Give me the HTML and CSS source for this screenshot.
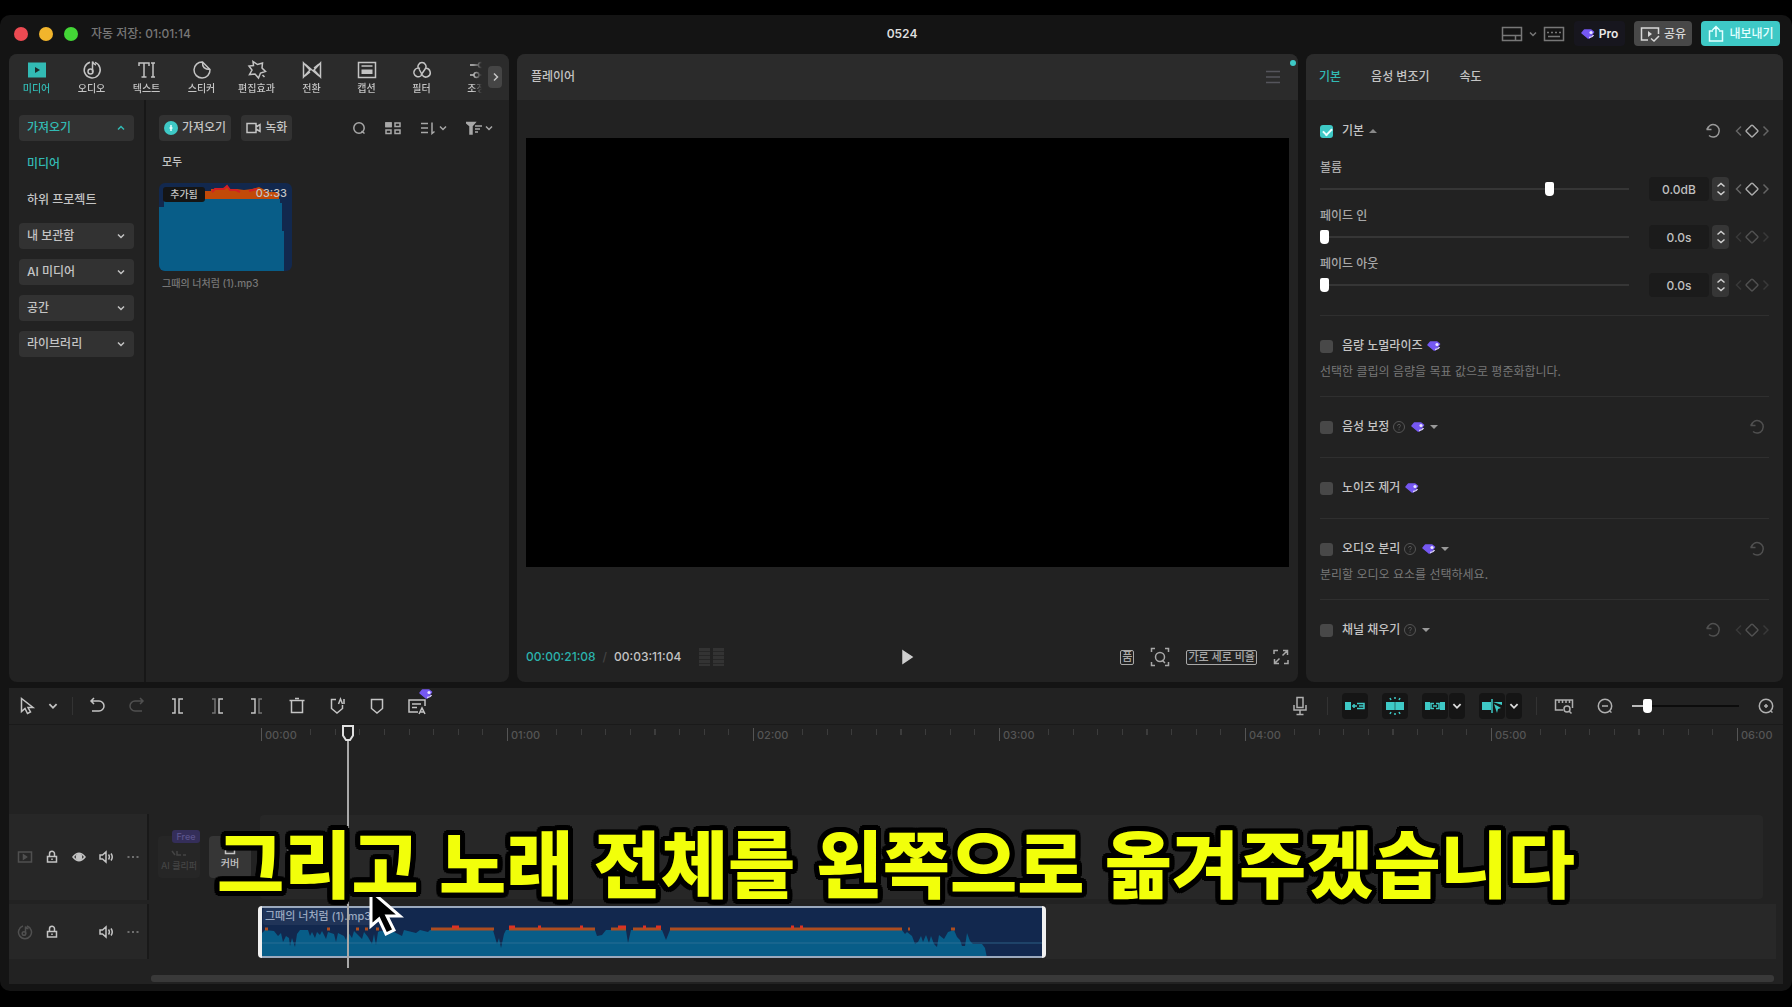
FILE: index.html
```
<!DOCTYPE html>
<html lang="ko">
<head>
    <meta charset="UTF-8">
    <meta name="viewport" content="width=device-width, initial-scale=1.0">
    <title>0524</title>
    <link rel="stylesheet" href="styles.css">
</head>
<body>

    <svg class="defs" aria-hidden="true">
        <symbol id="i-down" viewBox="0 0 10 10"><path d="M2 3.5l3 3 3-3"/></symbol>
        <symbol id="i-up" viewBox="0 0 10 10"><path d="M2 6.5l3-3 3 3"/></symbol>
        <symbol id="i-reset" viewBox="0 0 16 16"><path d="M1.5 6.5h5M2 6.500A6.200 6.200 0 1 1 4 12.500M1.500 6.500L4 4"/></symbol>
        <symbol id="i-key" viewBox="0 0 34 16"><path class="dim" d="M6 3.500L1.500 8 6 12.500M28.500 3.500L33 8l-4.500 4.500"/><path class="diamond" d="M16.300 2.500q.7-.7 1.400 0l4.800 4.800q.7.7 0 1.400l-4.800 4.800q-.7.7-1.400 0l-4.800-4.800q-.7-.7 0-1.400z"/></symbol>
        <symbol id="i-gem" viewBox="0 0 14 12"><path d="M3.500 2h6.500l2.500 2-4.500 6H7L1 5z" fill="#7558f2" stroke="#7558f2" stroke-linejoin="round"/><circle cx="10" cy="4.500" r="1.600" fill="#e9e4ff" stroke="none"/><path d="M8 9.500q3 .2 4.500-2.500" stroke="#d9d0ff" stroke-width="1.500"/></symbol>
        <symbol id="i-help" viewBox="0 0 14 14"><circle cx="7" cy="7" r="5.500"/><path d="M5.500 5.800Q5.600 4.300 7 4.300t1.500 1.300Q8.500 6.500 7 7.500v.8M7 9.300v1"/></symbol>
        <symbol id="i-lock" viewBox="0 0 16 16"><path d="M3.500 7.500h9v5.500h-9zM5.500 7V4.800a2.500 2.500 0 0 1 5 0V7M8 9.500v1.500"/></symbol>
        <symbol id="i-sound" viewBox="0 0 16 16"><path d="M2 6h2.500L8 3v10L4.500 10H2zM10.500 5.500q1.800 2.500 0 5M13 4.500q2.500 3.500 0 7"/></symbol>
        <symbol id="i-more" viewBox="0 0 16 16"><path d="M2.500 8h2M7 8h2M11.500 8h2"/></symbol>
    </svg>

    <div class="window">
        <header class="titlebar">
            <div class="title-left">
                <span class="light red"></span>
                <span class="light yellow"></span>
                <span class="light green"></span>
                <span class="autosave">자동 저장: 01:01:14</span>
            </div>
            <h1>0524</h1>
            <div class="title-right">
                <button class="plain layout-btn" aria-label="레이아웃">
                    <svg width="22" height="18" viewBox="0 0 22 18"><path d="M1.500 2.500h19v13h-19zM1.500 10.500h19M14.500 10.500v5"/></svg>
                    <svg width="10" height="10"><use href="#i-down"/></svg>
                </button>
                <button class="plain" aria-label="단축키">
                    <svg width="22" height="18" viewBox="0 0 22 18"><path d="M1.500 2.500h19v13h-19zM4 7.500h2M8 7.500h2M12 7.500h2M16 7.500h2M5 11.500h12"/></svg>
                </button>
                <button class="pro"><svg width="14" height="12"><use href="#i-gem"/></svg>Pro</button>
                <button class="share">
                    <svg width="20" height="18" viewBox="0 0 20 18"><path d="M8 15H1.500V3h17v6M11 13.500l3 2.500 5-5"/><path d="M8 6v6l4-3z" fill="currentColor" stroke="none"/></svg>
                    공유
                </button>
                <button class="export">
                    <svg width="18" height="18" viewBox="0 0 18 18"><path d="M6 6H2.500v10h13V6H12M9 12V2M5.500 5L9 1.500 12.500 5"/></svg>
                    내보내기
                </button>
            </div>
        </header>

        <main class="workspace">
            <section class="panel library">
                <div class="panel-head nav">
                    <div class="nav-tabs">
                        <button class="tab active"><svg width="20" height="20" viewBox="0 0 20 20"><path d="M1 2.500h18v15H1z" fill="currentColor" stroke="none"/><path d="M8 7v6l5-3z" fill="#1c2b2b" stroke="none"/></svg>미디어</button>
                        <button class="tab"><svg width="20" height="20" viewBox="0 0 20 20"><path d="M8 2.200a8 8 0 1 0 5 .2M10.500 12V1.500q1 3 3.500 3.500"/><circle cx="8.500" cy="11.500" r="2.500"/></svg>오디오</button>
                        <button class="tab"><svg width="20" height="20" viewBox="0 0 20 20"><path d="M2 6V3h10v3M7 3v14M4.500 17h5M14 3h4M16 3v14M14 17h4"/></svg>텍스트</button>
                        <button class="tab"><svg width="20" height="20" viewBox="0 0 20 20"><path d="M10.500 2a8 8 0 1 0 7.500 7.500zM10.500 2q-.5 7.500 7.500 7.500"/></svg>스티커</button>
                        <button class="tab"><svg width="20" height="20" viewBox="0 0 20 20"><path d="M6 1.500l4.500 3L15.500 3 15 8l3.500 3.500-5 1.500-2 5-3.500-4-5.500.5L5 10 2 6l4.500-.5zM15.500 15l2 2"/></svg>편집효과</button>
                        <button class="tab"><svg width="20" height="20" viewBox="0 0 20 20"><path d="M1.500 3v14L8 10zM18.500 3v14L12 10zM3 4l14 12M8 12l-5 4M12 8l5-4"/></svg>전환</button>
                        <button class="tab"><svg width="20" height="20" viewBox="0 0 20 20"><path d="M1.500 2.500h17v15h-17zM4.500 6h11"/><path d="M4.500 9.500h11v4.500h-11z" fill="currentColor" stroke="none"/></svg>캡션</button>
                        <button class="tab"><svg width="20" height="20" viewBox="0 0 20 20"><path d="M6.500 8.500a4 4 0 1 1 7 0L9 15M8 8.500a4.300 4.300 0 1 0 2 6M13 8.500a4.300 4.300 0 1 1-3 6L7 9"/></svg>필터</button>
                        <button class="tab"><svg width="20" height="20" viewBox="0 0 20 20"><path d="M3 5h8M3 15h4M12 15h6"/><circle cx="14" cy="5" r="2.500"/><circle cx="9.500" cy="15" r="2.500"/></svg>조정</button>
                    </div>
                    <button class="nav-next" aria-label="다음"><svg width="9" height="12" viewBox="0 0 9 12"><path d="M3 2.500L6.500 6 3 9.500"/></svg></button>
                </div>
                <div class="library-body">
                    <aside class="sidebar">
                        <button class="side group active">가져오기<svg width="10" height="10"><use href="#i-up"/></svg></button>
                        <button class="side active">미디어</button>
                        <button class="side">하위 프로젝트</button>
                        <button class="side group">내 보관함<svg width="10" height="10"><use href="#i-down"/></svg></button>
                        <button class="side group">AI 미디어<svg width="10" height="10"><use href="#i-down"/></svg></button>
                        <button class="side group">공간<svg width="10" height="10"><use href="#i-down"/></svg></button>
                        <button class="side group">라이브러리<svg width="10" height="10"><use href="#i-down"/></svg></button>
                    </aside>
                    <div class="media">
                        <div class="media-bar">
                            <button class="chip"><svg width="14" height="14" viewBox="0 0 14 14"><circle cx="7" cy="7" r="7" fill="#3ec9c6" stroke="none"/><path d="M7 4v6M5.500 7h3" stroke="#e6ffff"/></svg>가져오기</button>
                            <button class="chip"><svg width="15" height="14" viewBox="0 0 15 14"><path d="M1 2.500h9v9H1zM10 6l4-2.500v7L10 8"/></svg>녹화</button>
                            <div class="media-tools">
                                <button class="plain" aria-label="검색"><svg width="14" height="14" viewBox="0 0 14 14"><circle cx="7" cy="7" r="5.200"/><path d="M9.500 10l3 2.500"/></svg></button>
                                <button class="plain" aria-label="보기"><svg width="18" height="14" viewBox="0 0 18 14"><path d="M2 2h5v3.500H2zM11 2h5v3.500h-5zM2 9h5v3.500H2zM11 9h5v3.500h-5z"/><path d="M2 2h5v3.500H2z" fill="currentColor"/></svg></button>
                                <button class="plain" aria-label="정렬"><svg width="16" height="14" viewBox="0 0 16 14"><path d="M1 2.500h7M1 7h7M1 11.500h7M12 1.500v11l2.500-2"/></svg><svg width="10" height="10"><use href="#i-down"/></svg></button>
                                <button class="plain" aria-label="필터"><svg width="16" height="14" viewBox="0 0 16 14"><path d="M0 1.500h9L6 5v8H4V5z" fill="currentColor"/><path d="M9 5h7M9 8h5M9 11h3"/></svg><svg width="10" height="10"><use href="#i-down"/></svg></button>
                            </div>
                        </div>
                        <h2>모두</h2>
                        <figure class="asset">
                            <div class="thumb">
                                <svg viewBox="0 0 133 88" preserveAspectRatio="none"><path d="M45 17V8h7V6h10l6-3 2 3h8l7 1 8-1 7-2 10 5h10v8z" fill="#c24a08"/><path d="M53 9l3-3h9l3-3 3 4h6l4 2M90 8l8-2" stroke="#d31f24" stroke-width="2" fill="none"/><path d="M0 88V24h5V16h116v4h2v28h2v40z" fill="#085d88"/></svg>
                                <span class="added">추가됨</span>
                                <span class="length">03:33</span>
                            </div>
                            <figcaption>그때의 너처럼 (1).mp3</figcaption>
                        </figure>
                    </div>
                </div>
            </section>

            <section class="panel player">
                <div class="panel-head">
                    <h2>플레이어</h2>
                    <button class="plain menu" aria-label="메뉴"><svg width="16" height="16" viewBox="0 0 16 16"><path d="M1 2.500h14M1 8h14M1 13.500h14"/></svg></button>
                    <span class="dot"></span>
                </div>
                <div class="stage"><div class="screen"></div></div>
                <div class="controls">
                    <div class="times">
                        <span class="now">00:00:21:08</span><span class="slash">/</span><span>00:03:11:04</span>
                        <span class="levels"><i></i><i></i></span>
                    </div>
                    <button class="plain play" aria-label="재생"><svg width="12" height="16" viewBox="0 0 12 16"><path d="M1 2l9 6-9 6z" fill="currentColor"/></svg></button>
                    <div class="view-tools">
                        <button class="boxed">품</button>
                        <button class="plain" aria-label="확대"><svg width="20" height="20" viewBox="0 0 20 20"><path d="M1.500 5V1.500H5M15 1.500h3.500V5M18.500 15v3.500H15M5 18.500H1.500V15M12 13l3 3"/><circle cx="10" cy="10" r="4.500"/></svg></button>
                        <button class="boxed">가로 세로 비율</button>
                        <button class="plain" aria-label="전체 화면"><svg width="16" height="16" viewBox="0 0 16 16"><path d="M1 5V1.500h4M10 1.500h4.500V6M9.500 6.500l5-5M15 11v3.500h-4M6 14.500H1.500V10M6.500 9.500l-5 5"/></svg></button>
                    </div>
                </div>
            </section>

            <section class="panel inspector">
                <div class="panel-head tabs">
                    <button class="plain active">기본</button>
                    <button class="plain">음성 변조기</button>
                    <button class="plain">속도</button>
                </div>
                <div class="inspector-body">
                    <div class="basic">
                        <div class="row">
                            <label><input type="checkbox" checked>기본</label>
                            <span class="caret up"></span>
                            <span class="row-tools"><svg class="reset" width="16" height="16"><use href="#i-reset"/></svg><svg class="key" width="34" height="16"><use href="#i-key"/></svg></span>
                        </div>
                        <div class="field">
                            <label for="volume">볼륨</label>
                            <div class="field-row">
                                <input type="range" id="volume" min="0" max="100" value="75">
                                <input type="text" value="0.0dB" aria-label="볼륨 값">
                                <button class="stepper" aria-label="조절"><svg width="10" height="18" viewBox="0 0 10 18"><path d="M1.500 6.500L5 3.500l3.500 3M1.500 11.500l3.500 3 3.500-3"/></svg></button>
                                <svg class="key" width="34" height="16"><use href="#i-key"/></svg>
                            </div>
                        </div>
                        <div class="field">
                            <label for="fadein">페이드 인</label>
                            <div class="field-row">
                                <input type="range" id="fadein" min="0" max="100" value="0">
                                <input type="text" value="0.0s" aria-label="페이드 인 값">
                                <button class="stepper" aria-label="조절"><svg width="10" height="18" viewBox="0 0 10 18"><path d="M1.500 6.500L5 3.500l3.500 3M1.500 11.500l3.500 3 3.500-3"/></svg></button>
                                <svg class="key off" width="34" height="16"><use href="#i-key"/></svg>
                            </div>
                        </div>
                        <div class="field">
                            <label for="fadeout">페이드 아웃</label>
                            <div class="field-row">
                                <input type="range" id="fadeout" min="0" max="100" value="0">
                                <input type="text" value="0.0s" aria-label="페이드 아웃 값">
                                <button class="stepper" aria-label="조절"><svg width="10" height="18" viewBox="0 0 10 18"><path d="M1.500 6.500L5 3.500l3.500 3M1.500 11.500l3.500 3 3.500-3"/></svg></button>
                                <svg class="key off" width="34" height="16"><use href="#i-key"/></svg>
                            </div>
                        </div>
                    </div>
                    <div class="option noted">
                        <div class="row">
                            <label><input type="checkbox">음량 노멀라이즈</label>
                            <svg class="gem" width="14" height="12"><use href="#i-gem"/></svg>
                        </div>
                        <p>선택한 클립의 음량을 목표 값으로 평준화합니다.</p>
                    </div>
                    <div class="option">
                        <div class="row">
                            <label><input type="checkbox">음성 보정</label>
                            <svg class="help" width="14" height="14"><use href="#i-help"/></svg>
                            <svg class="gem" width="14" height="12"><use href="#i-gem"/></svg>
                            <span class="caret"></span>
                            <span class="row-tools single"><svg class="reset off" width="16" height="16"><use href="#i-reset"/></svg></span>
                        </div>
                    </div>
                    <div class="option">
                        <div class="row">
                            <label><input type="checkbox">노이즈 제거</label>
                            <svg class="gem" width="14" height="12"><use href="#i-gem"/></svg>
                        </div>
                    </div>
                    <div class="option noted">
                        <div class="row">
                            <label><input type="checkbox">오디오 분리</label>
                            <svg class="help" width="14" height="14"><use href="#i-help"/></svg>
                            <svg class="gem" width="14" height="12"><use href="#i-gem"/></svg>
                            <span class="caret"></span>
                            <span class="row-tools single"><svg class="reset off" width="16" height="16"><use href="#i-reset"/></svg></span>
                        </div>
                        <p>분리할 오디오 요소를 선택하세요.</p>
                    </div>
                    <div class="option">
                        <div class="row">
                            <label><input type="checkbox">채널 채우기</label>
                            <svg class="help" width="14" height="14"><use href="#i-help"/></svg>
                            <span class="caret"></span>
                            <span class="row-tools"><svg class="reset off" width="16" height="16"><use href="#i-reset"/></svg><svg class="key off" width="34" height="16"><use href="#i-key"/></svg></span>
                        </div>
                    </div>
                </div>
            </section>
        </main>

        <section class="timeline">
            <div class="toolbar">
                <div class="tools">
                    <button class="tool" aria-label="선택"><svg width="20" height="20" viewBox="0 0 20 20"><path d="M4.500 2.500v13l3.500-3 2.500 5 3-1.500-2.500-4.500H16z"/></svg></button>
                    <button class="tool narrow" aria-label="선택 모드"><svg width="12" height="12"><use href="#i-down"/></svg></button>
                    <span class="sep"></span>
                </div>
                <div class="tools edit">
                    <button class="tool" aria-label="실행 취소"><svg width="20" height="20" viewBox="0 0 20 20"><path d="M4 5h8a5 5 0 0 1 0 10H5M7 2L4 5l3 3"/></svg></button>
                    <button class="tool off" aria-label="다시 실행"><svg width="20" height="20" viewBox="0 0 20 20"><path d="M16 5H8a5 5 0 0 0 0 10h7M13 2l3 3-3 3"/></svg></button>
                    <button class="tool" aria-label="분할"><svg width="20" height="20" viewBox="0 0 20 20"><path d="M5 3h3v14H5M16 3h-4v14h4M8 3v14M12 3v14"/></svg></button>
                    <button class="tool" aria-label="왼쪽 삭제"><svg width="20" height="20" viewBox="0 0 20 20"><path class="dim" d="M5 3h3v14H5"/><path d="M16 3h-4v14h4"/></svg></button>
                    <button class="tool" aria-label="오른쪽 삭제"><svg width="20" height="20" viewBox="0 0 20 20"><path d="M4 3h4v14H4"/><path class="dim" d="M15 3h-3v14h3"/></svg></button>
                    <button class="tool" aria-label="삭제"><svg width="20" height="20" viewBox="0 0 20 20"><path d="M2.500 4.500h15M4.500 4.500v12h11v-12M8 2.500h4"/></svg></button>
                    <button class="tool" aria-label="자동 마커"><svg width="20" height="20" viewBox="0 0 20 20"><path d="M9 3.500H4.500v9L10 17l5.500-4.500V9M11.500 8l2-5 2 5M17 3v5"/></svg></button>
                    <button class="tool" aria-label="마커"><svg width="20" height="20" viewBox="0 0 20 20"><path d="M4.500 3.500h11v9L10 17l-5.500-4.500z"/></svg></button>
                    <button class="tool badge" aria-label="자막"><svg width="20" height="20" viewBox="0 0 20 20"><path d="M11 16H2V4h16v6M5 8h9M5 11.500h5M12 18l3-6 3 6M13 16h4"/></svg><svg class="gem" width="14" height="12"><use href="#i-gem"/></svg></button>
                </div>
                <div class="tools right">
                    <button class="tool mic" aria-label="녹음"><svg width="20" height="20" viewBox="0 0 20 20"><path d="M7 1.500h6v10H7zM4 9v5h12V9M10 14v4M6.500 18.500h7"/></svg></button>
                    <span class="sep"></span>
                    <div class="snaps">
                        <button class="snap" aria-label="자석"><svg width="20" height="12" viewBox="0 0 20 12"><path d="M0 2h6v8H0z" fill="currentColor" stroke="none"/><path d="M7 6h5M9 4v4M12 3.500h7v5h-7M14 6h5"/></svg></button>
                        <button class="snap" aria-label="자동 스냅"><svg width="20" height="20" viewBox="0 0 20 20"><path d="M1 6h8v8H1zM11 6h8v8h-8z" fill="currentColor" stroke="none"/><path d="M10 1v2M10 17v2M5 2l1 2M15 2l-1 2M5 18l1-2M15 18l-1-2M10 6v8"/></svg></button>
                        <div class="snap-pair">
                            <button class="snap" aria-label="연결"><svg width="20" height="12" viewBox="0 0 20 12"><path d="M0 2h5v8H0zM15 2h5v8h-5z" fill="currentColor" stroke="none"/><path d="M9 3.500H6v5h3M11 3.500h3v5h-3M8 6h4"/></svg></button>
                            <button class="snap more" aria-label="연결 옵션"><svg width="12" height="12"><use href="#i-down"/></svg></button>
                        </div>
                        <div class="snap-pair">
                            <button class="snap" aria-label="미리 보기"><svg width="20" height="20" viewBox="0 0 20 20"><path d="M0 6h9v8H0zM11 6h9v3l-9-3z" fill="currentColor" stroke="none"/><path d="M10 3v14"/><path d="M12 8l7 4-3 1-1 4z" fill="currentColor" stroke="none"/></svg></button>
                            <button class="snap more" aria-label="미리 보기 옵션"><svg width="12" height="12"><use href="#i-down"/></svg></button>
                        </div>
                    </div>
                    <span class="sep"></span>
                    <button class="tool fit" aria-label="맞춤"><svg width="20" height="20" viewBox="0 0 20 20"><path d="M9 14H1.500V4h17v8M5 4v3M8.500 4v3M12 4v3M15.500 4v3M15 15l2.500 2.500"/><circle cx="13" cy="13" r="3"/></svg></button>
                    <button class="tool out" aria-label="축소"><svg width="18" height="18" viewBox="0 0 18 18"><circle cx="9" cy="9" r="6.700"/><path d="M6 9h6M13.500 14l2 1.500"/></svg></button>
                    <input type="range" class="zoom" min="0" max="100" value="11" aria-label="확대/축소">
                    <button class="tool" aria-label="확대"><svg width="18" height="18" viewBox="0 0 18 18"><circle cx="9" cy="9" r="6.700"/><path d="M7 9h4M9 7v4M13.500 14l2 1.500"/></svg></button>
                </div>
            </div>

            <div class="ruler">
                <div class="minute"><span>00:00</span><i></i></div>
                <div class="minute"><span>01:00</span><i></i></div>
                <div class="minute"><span>02:00</span><i></i></div>
                <div class="minute"><span>03:00</span><i></i></div>
                <div class="minute"><span>04:00</span><i></i></div>
                <div class="minute"><span>05:00</span><i></i></div>
                <div class="minute"><span>06:00</span><i></i></div>
            </div>

            <div class="tracks">
                <div class="track spacer"><div class="track-head"></div></div>
                <div class="track video">
                    <div class="track-head">
                        <svg class="off" width="16" height="16" viewBox="0 0 16 16"><path d="M1.500 3h13v10h-13z"/><path d="M6.500 6v4l3-2z" fill="currentColor"/></svg>
                        <svg width="16" height="16"><use href="#i-lock"/></svg>
                        <svg width="16" height="16" viewBox="0 0 16 16"><path d="M2 8q6-7.500 12 0-6 7.500-12 0z"/><circle cx="8" cy="8" r="2.500" fill="currentColor"/></svg>
                        <svg width="16" height="16"><use href="#i-sound"/></svg>
                        <svg class="more" width="16" height="16"><use href="#i-more"/></svg>
                    </div>
                    <div class="lane">
                        <button class="cover-btn ai"><span class="free">Free</span><svg width="16" height="12" viewBox="0 0 16 12"><path d="M1 4l3 4M6 4v4h4M12 8h3"/></svg>AI 클리퍼</button>
                        <button class="cover-btn"><svg width="12" height="12" viewBox="0 0 12 12"><path d="M1.500 2.500h9v7h-9z"/></svg>커버</button>
                        <div class="drop"><svg width="16" height="10" viewBox="0 0 16 10"><path d="M1 2.500h14v5H1zM5 2.500v5M11 2.500v5"/></svg></div>
                    </div>
                </div>
                <div class="track audio">
                    <div class="track-head">
                        <svg class="off" width="16" height="16" viewBox="0 0 16 16"><path d="M6 2a6.500 6.500 0 1 0 4 0M8.500 9.500V2.500q.5 2 3 2"/><circle cx="7" cy="9.500" r="1.800"/></svg>
                        <svg width="16" height="16"><use href="#i-lock"/></svg>
                        <span></span>
                        <svg width="16" height="16"><use href="#i-sound"/></svg>
                        <svg class="more" width="16" height="16"><use href="#i-more"/></svg>
                    </div>
                    <div class="lane">
                        <div class="clip">
                            <svg class="wave" viewBox="0 0 780 52" preserveAspectRatio="none">
                                <path class="body" d="M0 52V27L3 24 12 25 16 30 19 27 21 36 24 30 27 32 28 40 30 32 33 41 35 28 38 24H46L48 30 50 26 53 32 55 26 58 29 60 25 64 33 66 26 72 28 74 36 76 27 82 30 84 34 86 26 90 32 92 25 100 33 102 26 106 31 110 38 112 28 114 39 116 26 118 25 132 26 140 30 142 24 154 27 158 24 166 26 168 24H231L235 38 237 32 239 42 242 28 244 24H333L335 30 340 29 344 24H364L366 37 369 24H400L404 34 408 24H640L643 28 645 26 650 30 653 38 656 36 659 30 661 36 664 29 667 37 669 30 672 38 675 41 677 29 682 33 686 26 692 24 695 31 698 34 700 40 703 40 705 27 708 35 711 38 720 38 723 42 725 52z"/>
                                <path class="peak" d="M3 23h3M65 23h3M94 23h3M103 23h3M114 23h3M169 23h63M247 23h86M349 23h15M371 23h28M408 23h232M646 23h2M689 23h4"/>
                                <path class="hot" d="M190 21h7M247 21h6M276 21h3M318 21h3M356 21h8M381 21h3M394 21h5M529 21h3M538 21h3"/>
                                <path class="mid" d="M0 37h780"/>
                            </svg>
                            <span class="clip-name">그때의 너처럼 (1).mp3</span>
                        </div>
                    </div>
                </div>
                <div class="track foot">
                    <div class="track-head"></div>
                    <div class="scroll"></div>
                </div>
            </div>

            <div class="playhead">
                <svg width="12" height="16" viewBox="0 0 12 16"><path d="M1 1h10v9.500L8 15H4L1 10.500z"/></svg>
            </div>
        </section>
    </div>

    <svg class="cursor" width="36" height="48" viewBox="0 0 36 48" aria-hidden="true"><path d="M3 2v35l8-7 7 15 8-4-7-14h13z" fill="#000" stroke="#fff" stroke-width="3"/></svg>
    <p class="caption">그리고 노래 전체를 왼쪽으로 옮겨주겠습니다</p>

</body>
</html>
```
FILE: styles.css
```
* {
    box-sizing: border-box;
}

body {
    margin: 0;
    padding: 15px 0 16px;
    min-height: 100vh;
    display: flex;
    flex-direction: column;
    background: #000;
    color: #c4c4c4;
    font-family: Inter, "Noto Sans CJK KR", sans-serif;
    font-size: 12px;
    font-weight: 500;
    line-height: 18px;
    position: relative;
    overflow: hidden;
}

h1, h2, p, figure {
    margin: 0;
    font-size: 12px;
    font-weight: 500;
}

button, input {
    font: inherit;
    color: inherit;
    margin: 0;
}

button {
    display: flex;
    align-items: center;
    justify-content: center;
    padding: 0;
    border: none;
    background: none;
    white-space: nowrap;
    cursor: pointer;
}

svg {
    display: block;
    flex: none;
    fill: none;
    stroke: currentColor;
    stroke-width: 1.5;
}

.defs {
    position: absolute;
    width: 0;
    height: 0;
}

.dim { opacity: 0.5; }

.window {
    flex: 1;
    display: flex;
    flex-direction: column;
    background: #141414;
    border-radius: 10px;
    padding: 0 9px 7px;
}

/* title bar */
.titlebar {
    height: 39px;
    display: grid;
    grid-template-columns: 1fr auto 1fr;
    align-items: center;
    padding: 0 3px 2px 5px;
}

.titlebar h1 {
    padding-left: 10px;
    color: #ddd;
    font-weight: 600;
}

.title-left, .title-right {
    display: flex;
    align-items: center;
}

.title-left { gap: 11px; }

.light {
    width: 14px;
    height: 14px;
    border-radius: 50%;
}

.red { background: #ec4a52; }
.yellow { background: #f2b52c; }
.green { background: #43d636; }

.autosave { color: #777; margin-left: 2px; }

.title-right {
    justify-content: flex-end;
    color: #777;
    gap: 5px;
}

.layout-btn { gap: 5px; }

.pro, .share, .export {
    height: 25px;
    margin-left: 4px;
    border-radius: 4px;
    gap: 4px;
}

.pro {
    width: 51px;
    background: #17161e;
    color: #e8e8e8;
    font-weight: 600;
}

.share {
    width: 58px;
    background: #484848;
    color: #d8d8d8;
}

.export {
    width: 79px;
    background: #3ec9c6;
    color: #e4ffff;
}

/* panels */
.workspace {
    flex: 1;
    display: grid;
    grid-template-columns: 500px 1fr 477px;
    gap: 8px;
    margin-bottom: 6px;
}

.panel {
    display: flex;
    flex-direction: column;
    background: #222;
    border-radius: 8px;
    overflow: hidden;
    min-width: 0;
    position: relative;
}

.panel-head {
    height: 46px;
    display: flex;
    align-items: center;
    background: #2b2b2b;
}

.nav { padding-right: 7px; }

.nav-tabs {
    flex: 1;
    display: flex;
    min-width: 0;
    overflow: hidden;
    margin-right: 6px;
    mask-image: linear-gradient(90deg, #000 464px, transparent);
}

.tab {
    flex: 0 0 55px;
    flex-direction: column;
    font-size: 10px;
    line-height: 14px;
    gap: 1px;
}

.active { color: #32bab4; }

.nav-next {
    width: 14px;
    height: 22px;
    border-radius: 4px;
    background: #454545;
}

.library-body {
    flex: 1;
    display: flex;
}

.sidebar {
    width: 137px;
    padding: 15px 10px 0;
    border-right: 2px solid #171717;
    display: flex;
    flex-direction: column;
    gap: 10px;
}

.side {
    height: 26px;
    justify-content: space-between;
    padding: 0 8px;
    border-radius: 4px;
}

.group { background: #323232; }

.media {
    flex: 1;
    padding: 15px 13px 0;
}

.media-bar {
    display: flex;
    align-items: center;
    gap: 10px;
}

.chip {
    height: 26px;
    padding: 0 5px;
    gap: 4px;
    background: #323232;
    border-radius: 4px;
}

.media-tools {
    flex: 1;
    display: flex;
    justify-content: flex-end;
    gap: 18px;
    padding-right: 2px;
    color: #a8a8a8;
}

.media-tools button { gap: 2px; }

.media h2 {
    margin: 12px 3px;
    font-size: 11px;
}

.asset { width: 133px; }

.thumb {
    height: 88px;
    border-radius: 6px;
    background: #12284e;
    overflow: hidden;
    position: relative;
}

.thumb svg {
    width: 100%;
    height: 100%;
    stroke: none;
}

.added, .length {
    position: absolute;
    top: 4px;
    font-size: 10px;
    line-height: 15px;
}

.added {
    left: 4px;
    width: 42px;
    text-align: center;
    background: #151515;
    border-radius: 3px;
}

.length { right: 5px; font-size: 11px; line-height: 13px; }

.asset figcaption {
    padding: 3px;
    font-size: 10px;
    color: #777;
}

/* player */
.player .panel-head {
    justify-content: space-between;
    padding: 0 17px 0 14px;
}

.menu { color: #55555c; }

.dot {
    position: absolute;
    top: 6px;
    right: 2px;
    width: 6px;
    height: 6px;
    border-radius: 50%;
    background: #3ec9c6;
}

.stage {
    flex: 1;
    display: flex;
    align-items: center;
    padding: 0 9px;
}

.screen {
    width: 100%;
    aspect-ratio: 16 / 9;
    background: #000;
}

.controls {
    height: 77px;
    padding: 0 9px 13px;
    display: grid;
    grid-template-columns: 1fr auto 1fr;
    align-items: end;
}

.controls > * { height: 24px; }

.times, .view-tools {
    display: flex;
    align-items: center;
}

.now { color: #2bb3ad; }
.slash { color: #444; margin: 0 7px; }

.levels {
    display: flex;
    gap: 3px;
    margin-left: 18px;
}

.levels i {
    width: 11px;
    height: 18px;
    background: repeating-linear-gradient(#333 0 3px, #262626 3px 4px);
}

.play { color: #d0d0d0; }

.view-tools {
    justify-content: flex-end;
    gap: 16px;
    color: #a8a8a8;
}

.boxed {
    height: 15px;
    border: 1px solid #a8a8a8;
    border-radius: 2px;
    font-size: 11px;
    line-height: 13px;
    padding: 0 1px;
}

/* inspector */
.tabs {
    padding: 0 13px;
    gap: 30px;
}

.inspector-body { padding: 20px 14px; }

.row {
    display: flex;
    align-items: center;
    height: 22px;
}

.row label {
    display: flex;
    align-items: center;
    gap: 9px;
}

input[type="checkbox"] {
    appearance: none;
    width: 13px;
    height: 13px;
    border-radius: 3px;
    background: #484848;
}

input[type="checkbox"]:checked {
    background: #3ec9c6;
}

input[type="checkbox"]:checked::before {
    content: "";
    display: block;
    width: 7px;
    height: 4px;
    margin: 3px;
    border: solid #e9ffff;
    border-width: 0 0 2px 2px;
    transform: rotate(-45deg);
}

.caret {
    border: 4px solid transparent;
    border-top: 4px solid #999;
    border-bottom: 0;
    margin-left: 5px;
}

.caret.up {
    border-top: 0;
    border-bottom: 4px solid #888;
}

.row .help { color: #555; stroke-width: 1; margin-left: 3px; }
.row .gem { margin-left: 5px; }

.row-tools {
    display: flex;
    align-items: center;
    gap: 14px;
    margin-left: auto;
    color: #9a9a9a;
}

.row-tools.single { padding-right: 4px; }

.key { color: #a8a8a8; }
.key.off, .reset.off, .off { color: #505050; }

.basic { padding-bottom: 18px; }
.basic .row { margin-bottom: 17px; }

.field { margin-top: 6px; color: #a8a8a8; }
.field > label { display: block; }

.field-row {
    display: flex;
    align-items: center;
    height: 24px;
}

input[type="range"] {
    appearance: none;
    flex: 1;
    min-width: 0;
    height: 14px;
    background: linear-gradient(#363636, #363636) center / 100% 2px no-repeat;
}

input[type="range"]::-webkit-slider-thumb {
    appearance: none;
    width: 9px;
    height: 14px;
    background: #fff;
    border-radius: 2px 2px 4px 4px;
}

.field-row input[type="text"] {
    width: 60px;
    height: 24px;
    margin: 0 3px 0 20px;
    border: none;
    border-radius: 4px;
    background: #1b1b1b;
    color: #c0c0c0;
    text-align: center;
}

.stepper {
    width: 17px;
    height: 24px;
    margin-right: 6px;
    border-radius: 4px;
    background: #363636;
    color: #d0d0d0;
}

.option {
    border-top: 1px solid #2f2f2f;
    padding: 19px 0;
}

.option.noted { padding-bottom: 16px; }

.option p {
    margin-top: 5px;
    font-family: "Noto Sans CJK KR", sans-serif;
    font-weight: 400;
    color: #777;
}

/* timeline */
.timeline {
    background: #222;
    position: relative;
}

.toolbar {
    height: 37px;
    display: flex;
    align-items: center;
    padding: 0 5px 0 6px;
    border-bottom: 1px solid #1a1a1a;
}

.tools {
    display: flex;
    align-items: center;
}

.tool { width: 24px; height: 26px; }
.tool.narrow { margin-left: 2px; }

.sep {
    width: 1px;
    height: 18px;
    background: #333;
}

.tools > .narrow + .sep { margin-left: 7px; }

.edit {
    gap: 16px;
    margin-left: 12px;
}

.badge { position: relative; }

.badge .gem {
    position: absolute;
    top: -5px;
    right: -4px;
}

.right {
    margin-left: auto;
    color: #b0b0b0;
}

.mic { margin-right: 15px; }

.snaps {
    display: flex;
    gap: 14px;
    margin: 0 14px;
}

.snap-pair { display: flex; gap: 1px; }

.snap {
    width: 26px;
    height: 26px;
    border-radius: 4px;
    background: #151515;
    color: #3ec9c6;
}

.snap.more { width: 16px; color: #ddd; }

.fit { margin-left: 15px; }
.out { margin-left: 17px; }

input.zoom {
    flex: none;
    width: 107px;
    margin: 0 15px;
    background: linear-gradient(90deg, #bbb 12px, #0c0c0c 12px) center / 100% 2px no-repeat;
}

.ruler {
    height: 28px;
    display: flex;
    padding: 3px 0 0 252px;
    overflow: hidden;
    font-size: 11px;
    line-height: 14px;
    color: #555;
}

.minute {
    flex: 0 0 246px;
    display: flex;
}

.minute span {
    flex: 0 0 20%;
    height: 13px;
    border-left: 1px solid #555;
    padding-left: 3px;
}

.minute i {
    flex: 1;
    height: 6px;
    margin-top: 1px;
    background: repeating-linear-gradient(90deg, #3c3c3c 0 1px, transparent 1px 12.5%);
}

.track { display: flex; }

.track-head {
    flex: 0 0 138px;
    display: grid;
    grid-template-columns: repeat(5, 16px);
    gap: 11px;
    align-items: center;
    padding-left: 8px;
}

.track-head, .clip, .drop { min-width: 0; }
.track-head .more { color: #888; }

.spacer { height: 61px; }
.video { height: 86px; }
.audio { height: 55px; margin-top: 4px; }
.video .track-head, .audio .track-head { background: #272727; }

.lane {
    flex: 1;
    display: flex;
    align-items: center;
    border-left: 2px solid #191919;
    min-width: 0;
}

.video .lane { padding: 0 20px 0 9px; }
.audio .lane { padding: 0 7px 0 109px; }

.cover-btn {
    flex: 0 0 42px;
    flex-direction: column;
    height: 42px;
    margin-right: 9px;
    border-radius: 4px;
    background: #363636;
    font-size: 10px;
    line-height: 14px;
    position: relative;
}

.ai { background: #262626; color: #444; font-size: 9px; padding-top: 6px; }

.free {
    position: absolute;
    top: -6px;
    right: 0;
    width: 28px;
    border-radius: 3px;
    background: #342e59;
    color: #5b548c;
    line-height: 13px;
}

.drop {
    flex: 1;
    height: 84px;
    display: flex;
    align-items: center;
    padding: 0 27px 8px;
    border-radius: 4px;
    background: #272727;
    color: #888;
}

.audio .lane::after {
    content: "";
    flex: 1;
    height: 55px;
    background: #282828;
}

.clip {
    flex: 0 0 788px;
    height: 52px;
    background: #12284e;
    border: solid #f0f0f0;
    border-width: 0 4px;
    border-radius: 4px;
    overflow: hidden;
    position: relative;
}

.wave {
    width: 100%;
    height: 52px;
    stroke: none;
}

.wave .body { fill: #085d88; }
.wave .peak { stroke: #ad4d20; stroke-width: 3; }
.wave .hot { stroke: #dd3222; stroke-width: 3; }
.wave .mid { stroke: #38759a; stroke-width: 1; opacity: 0.7; }

.clip::after {
    content: "";
    position: absolute;
    inset: 0;
    border: solid #9ba9bd;
    border-width: 2px 0;
}

.clip-name {
    position: absolute;
    top: 2px;
    left: 1px;
    padding: 0 2px;
    font-size: 11px;
    color: #9aa8c0;
    background: #203458;
    border-radius: 2px;
    line-height: 17px;
}

.foot { height: 25px; }

.scroll {
    flex: 1;
    align-self: flex-end;
    height: 7px;
    margin: 0 9px 2px 4px;
    border-radius: 3px;
    background: #393939;
}

.playhead {
    position: absolute;
    top: 37px;
    left: 333px;
    width: 12px;
    height: 243px;
    color: #e0e0e0;
    background: linear-gradient(#a8a8a8, #a8a8a8) center 14px / 2px 100% no-repeat;
}

.playhead svg { fill: #222; stroke-width: 2; }

/* subtitle over the recording */
.cursor {
    position: absolute;
    left: 368px;
    bottom: 70px;
}

.caption {
    position: absolute;
    left: 0;
    right: 0;
    bottom: 110px;
    text-align: center;
    font-family: "Noto Sans CJK KR", sans-serif;
    font-size: 73px;
    line-height: 74px;
    font-weight: 900;
    white-space: nowrap;
    color: #f2ff0a;
    text-shadow: 5px 0 #000, -5px 0 #000, 0 5px #000, 0 -5px #000,
        4px 4px #000, -4px 4px #000, 4px -4px #000, -4px -4px #000,
        5px 2px #000, -5px 2px #000, 5px -2px #000, -5px -2px #000,
        2px 5px #000, -2px 5px #000, 2px -5px #000, -2px -5px #000;
}
```
